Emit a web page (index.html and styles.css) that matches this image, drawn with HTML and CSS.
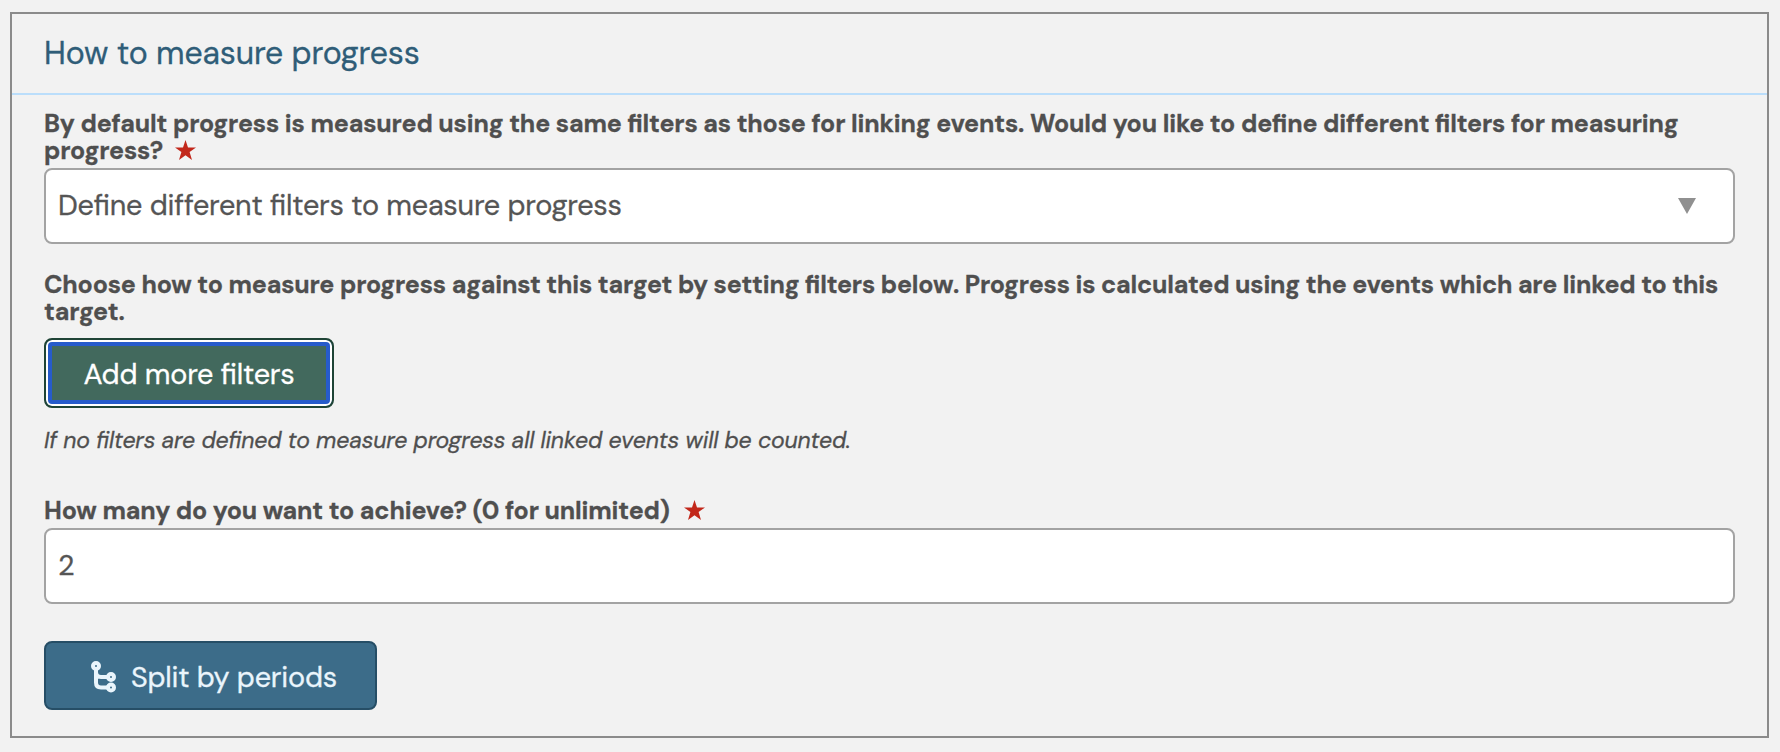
FILE: index.html
```html
<!DOCTYPE html>
<html lang="en">
<head>
    <meta charset="UTF-8">
    <meta name="viewport" content="width=device-width, initial-scale=1.0">
    <title>How to measure progress</title>
    <link rel="stylesheet" href="styles.css">
</head>
<body>
    <section class="panel">
        <div class="panel-header">
            <h2>How to measure progress</h2>
        </div>

        <form class="panel-body">
            <label class="field-label label-default" for="filterMode">By default progress is measured using the same filters as those for linking events. Would you like to define different filters for measuring progress?<svg class="star" viewBox="0 0 21 20"><path d="M10.5 0l2.5 7.4h8l-6.4 4.7 2.4 7.9-6.5-4.8L4 20l2.4-7.9L0 7.4h8z"/></svg></label>
            <div class="control select" id="filterMode">
                <span class="select-value">Define different filters to measure progress</span>
                <svg class="arrow" viewBox="0 0 18 16"><path d="M0 0h18L9 16z"/></svg>
            </div>

            <p class="field-label label-choose">Choose how to measure progress against this target by setting filters below. Progress is calculated using the events which are linked to this target.</p>
            <button type="button" class="btn btn-filters">Add more filters</button>
            <p class="hint">If no filters are defined to measure progress all linked events will be counted.</p>

            <label class="field-label label-amount" for="amount">How many do you want to achieve? (0 for unlimited)<svg class="star" viewBox="0 0 21 20"><path d="M10.5 0l2.5 7.4h8l-6.4 4.7 2.4 7.9-6.5-4.8L4 20l2.4-7.9L0 7.4h8z"/></svg></label>
            <input class="control" id="amount" type="text" value="2">

            <button type="button" class="btn btn-split">
                <svg class="icon" viewBox="0 0 26 32">
                    <circle cx="5" cy="5" r="3"/>
                    <circle cx="20" cy="16" r="3"/>
                    <circle cx="20" cy="26.5" r="3"/>
                    <path d="M5 8v13.5q0 5 5 5h7M5 11q0 5 5 5h7"/>
                </svg>
                <span>Split by periods</span>
            </button>
        </form>
    </section>
</body>
</html>
```
FILE: styles.css
```css
* {
    margin: 0;
    padding: 0;
    box-sizing: border-box;
}

body {
    font-family: 'DM Sans', Lato, sans-serif;
    font-feature-settings: 'liga' 1;
    -webkit-text-stroke: 0.3px;
    background: #f2f2f2;
    color: #4f4f4f;
    padding: 12px 11px 14px 10px;
}

.panel {
    height: 726px;
    border: 2px solid #8b8b8b;
}

.panel-header {
    height: 81px;
    padding: 19px 32px 0;
    border-bottom: 2px solid #bbdefb;
}

.panel-header h2 {
    font-size: 32px;
    font-weight: 400;
    line-height: 40px;
    color: #2f5d78;
    letter-spacing: -0.1px;
}

.panel-body {
    display: flex;
    flex-direction: column;
    align-items: flex-start;
    padding: 15px 32px 0;
}

.field-label {
    font-size: 25px;
    font-weight: 700;
    line-height: 27px;
    letter-spacing: -0.15px;
}

.label-default {
    height: 58px;
}

.label-default .star {
    margin-left: 12px;
}

.label-choose {
    margin-top: 27px;
    height: 67px;
    letter-spacing: -0.175px;
}

.label-amount {
    height: 31px;
    margin-top: 43px;
}

.star {
    width: 21px;
    height: 20px;
    margin-left: 14px;
    vertical-align: -1px;
    fill: #c2271a;
    stroke: none;
}

.control {
    width: 1691px;
    height: 76px;
    padding: 0 12px 2px;
    border: 2px solid #a3a3a3;
    border-radius: 8px;
    background: #fff;
    color: #555;
    font-family: inherit;
    font-size: 28.8px;
    letter-spacing: -0.2px;
}

.select {
    display: flex;
    align-items: center;
    justify-content: space-between;
    padding-right: 37px;
}

.arrow {
    width: 18px;
    height: 16px;
    margin-top: 2px;
    fill: #909090;
}

.btn {
    display: flex;
    align-items: center;
    border-radius: 8px;
    font-family: inherit;
    font-size: 28.8px;
    font-feature-settings: inherit;
    letter-spacing: -0.19px;
    white-space: nowrap;
}

.btn-filters {
    width: 290px;
    height: 70px;
    padding-top: 2px;
    justify-content: center;
    border: 2px solid #1f4436;
    background: #42695d;
    color: #fff;
    box-shadow: inset 0 0 0 2px #fff, inset 0 0 0 6px #265bcb;
}

.hint {
    margin-top: 18px;
    font-size: 23px;
    font-style: italic;
    line-height: 28px;
    letter-spacing: -0.155px;
}

.btn-split {
    width: 333px;
    height: 69px;
    margin-top: 37px;
    padding: 2px 0 0 45px;
    border: 2px solid #264e66;
    background: #3c6c89;
    color: #eaf5fc;
}

.icon {
    width: 26px;
    height: 32px;
    margin-right: 14px;
    fill: none;
    stroke: currentColor;
    stroke-width: 4;
}
```
